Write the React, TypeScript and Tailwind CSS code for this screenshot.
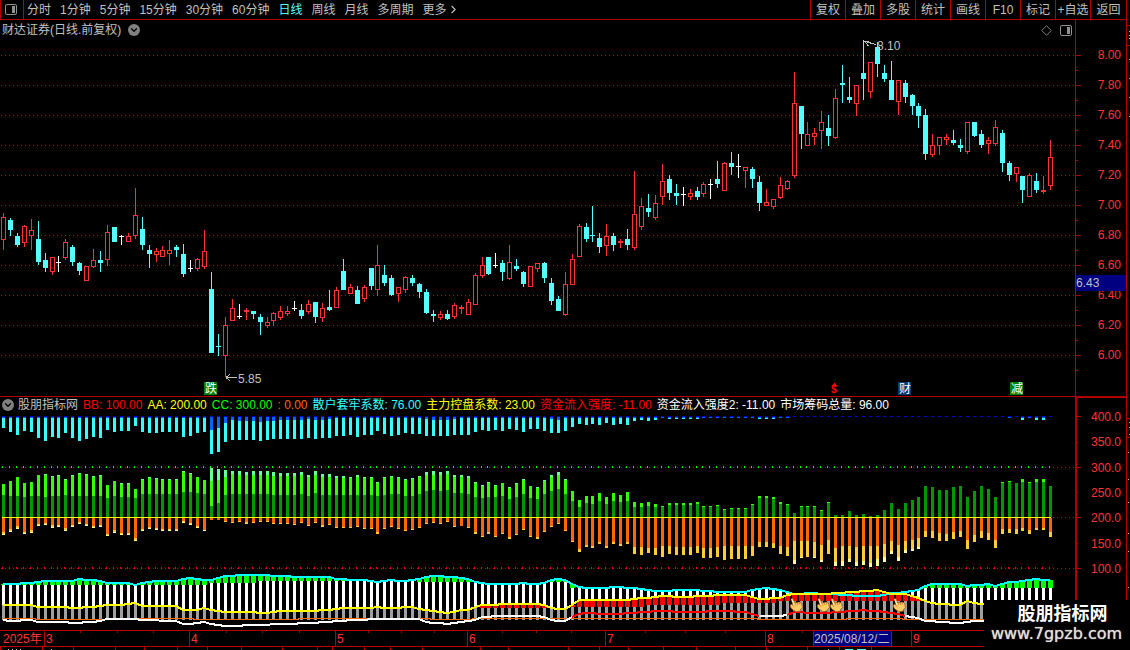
import { ChevronDown, ChevronRight } from 'lucide-react'

const periods = ['分时', '1分钟', '5分钟', '15分钟', '30分钟', '60分钟', '日线', '周线', '月线', '多周期']
const tools = ['复权', '叠加', '多股', '统计', '画线', 'F10', '标记', '+自选', '返回']
const prices = ['8.00', '7.80', '7.60', '7.40', '7.20', '7.00', '6.80', '6.60', '6.40', '6.20', '6.00']
const levels = ['400.0', '350.0', '300.0', '250.0', '200.0', '150.0', '100.0']

const legend = [
  { text: 'BB: 100.00', color: 'text-[#ff0000]' },
  { text: 'AA: 200.00', color: 'text-[#ffff00]' },
  { text: 'CC: 300.00', color: 'text-[#00ff00]' },
  { text: ': 0.00', color: 'text-[#ff6600]' },
  { text: '散户套牢系数: 76.00', color: 'text-[#33ffff]' },
  { text: '主力控盘系数: 23.00', color: 'text-[#ffff00]' },
  { text: '资金流入强度: -11.00', color: 'text-[#ff0000]' },
  { text: '资金流入强度2: -11.00', color: 'text-white' },
  { text: '市场筹码总量: 96.00', color: 'text-white' },
]

const months = [
  { label: '2025年', span: 44 },
  { label: '3', span: 145 },
  { label: '4', span: 146 },
  { label: '5', span: 132 },
  { label: '6', span: 138 },
  { label: '7', span: 160 },
  { label: '8', span: 146 },
  { label: '9', span: 215 },
]

// kind high top bottom low, r = up, c = down, w = flat
const candles = `r 213 217 240 250,c 218 220 230 236,c 233 236 245 247,r 225 226 243 247,r 219 230 236 250,c 221 239 262 265,c 253 260 268 272,r 257 257 272 275,w 256 262 263 272,r 239 242 258 260
c 245 247 262 266,c 262 263 271 275,r 266 266 281 281,r 249 260 267 268,c 251 260 263 272,r 225 232 260 266,c 227 227 242 242,w 235 236 237 245,r 233 236 242 242,r 188 215 236 239
c 217 229 245 250,c 245 250 254 268,r 248 251 255 262,r 246 250 257 257,r 240 250 254 265,c 245 247 250 257,c 244 254 274 277,w 260 268 269 272,r 258 259 269 271,r 230 251 267 269
c 272 289 353 353,c 334 346 347 356,r 317 325 356 377,r 299 308 321 321,w 304 316 317 319,r 308 310 312 320,c 311 311 314 319,c 314 317 322 335,r 317 322 326 328,r 312 313 321 326
r 306 311 318 320,r 306 311 314 316,w 301 308 309 311,c 304 310 316 319,r 300 304 312 314,c 302 302 317 323,r 303 308 318 322,c 290 307 310 311,r 287 290 308 308,c 259 271 290 290
r 284 287 294 294,c 286 290 304 304,r 285 287 299 302,c 268 268 286 290,r 245 265 290 296,c 265 275 283 286,c 275 278 295 296,r 287 287 294 302,r 276 277 290 293,c 275 278 283 286
c 283 284 292 298,c 289 292 313 314,c 310 314 316 322,r 311 314 318 320,c 310 314 319 320,r 303 305 317 319,r 305 307 309 314,r 299 302 315 315,r 273 275 305 305,r 257 265 276 278
c 257 257 274 275,w 253 265 266 268,c 260 263 272 281,r 245 262 279 280,c 259 266 269 271,c 271 272 284 287,r 266 266 287 287,r 263 263 269 272,c 262 263 278 283,c 278 283 301 305
c 296 299 311 311,r 272 284 315 316,r 254 259 285 285,r 224 226 257 257,c 223 227 239 242,c 206 235 236 242,c 233 238 247 253,r 224 236 246 256,c 233 236 245 251,r 239 241 243 248
c 229 239 245 250,r 171 214 248 250,r 198 206 227 230,c 194 208 212 217,r 195 203 218 220,r 164 181 197 205,c 175 179 193 200,c 184 193 196 205,w 187 194 195 206,r 189 193 197 200
c 187 191 197 200,r 182 184 194 197,w 179 184 185 199,c 161 179 184 188,r 162 163 191 191,c 152 163 167 175,w 154 166 167 178,r 167 167 171 188,c 167 169 179 188,c 176 182 203 211
r 189 202 206 206,r 199 199 207 209,r 177 185 198 199,r 180 181 189 190,r 72 103 176 178,c 106 106 134 149,r 122 134 146 146,r 128 133 137 145,r 111 122 131 149,c 115 128 136 146
r 89 98 138 139,c 65 83 85 103,c 77 97 100 103,r 85 85 104 116,c 40 73 79 100,r 62 62 92 98,c 42 47 64 77,c 65 73 79 82,c 61 80 100 100,r 80 80 102 115
c 80 83 97 103,c 94 95 106 115,c 103 106 116 128,c 109 115 154 160,r 134 145 155 157,r 137 137 146 155,r 134 137 140 145,c 130 140 143 145,c 139 145 148 152,r 122 122 152 154
c 122 122 136 137,c 130 134 145 148,r 137 140 144 154,r 120 127 144 146,c 130 133 163 172,c 161 163 175 181,r 167 167 174 182,c 176 176 190 203,r 173 175 197 197,c 173 181 190 193
r 176 190 192 194,r 140 157 186 190`
  .split(/[,\n]/)
  .map((row) => {
    const [kind, ...ys] = row.trim().split(' ')
    const [high, top, bottom, low] = ys.map(Number)
    return { kind, high, top, bottom, low }
  })

const nums = (s: string) => s.trim().split(/\s+/).map(Number)

const upTop = nums(`24 21 17 23 22 15 14 16 15 19 15 13 14 16 15 25 21 23 23 29 19 17 18 19 19 19 11 13 17 20
8 9 10 11 11 12 11 11 11 12 13 13 13 12 15 11 14 14 16 16 17 15 17 17 22 17 16 17 19 18
16 12 11 12 11 15 15 16 22 25 22 25 23 27 23 19 26 27 20 15 12 19 31 40 36 36 33 37 33 35
32 42 43 42 44 46 43 43 43 43 42 46 46 45 49 48 48 48 44 36 36 37 42 44 53 46 46 46 50 42
55 55 51 55 54 56 55 50 43 49 43 40 37 26 27 30 30 27 26 37 31 26 29 37 22 21 23 19 22 19 19 26`)

const upDark = nums(`35 36 36 37 36 36 37 36 36 35 36 36 36 36 36 38 36 37 37 38 34 34 34 34 34 34 32 32 33 34
46 43 35 34 34 34 34 34 34 35 35 35 35 34 36 33 35 35 35 35 35 35 35 35 36 35 34 34 36 36
34 31 30 31 30 33 33 34 37 38 37 37 36 39 37 34 38 39 34 31 29 34 41 47 43 44 41 44 41 42
41 47 47 46 47 47 45 45 45 45 44 47 47 46 50 49 49 49 45 38 38 39 44 45 53 47 47 47 51 43
55 55 51 55 54 56 55 50 43 49 43 40 37 26 27 30 30 27 26 37 31 26 29 37 23 22 23 22 23 22 22 26`)

const upPale = nums(`0 0 0 0 0 0 1 1 1 1 1 1 1 1 1 0 0 1 1 0 1 1 1 1 1 1 1 1 0 0
13 11 7 3 4 3 4 4 4 4 3 3 3 3 2 4 3 3 2 2 1 2 1 1 1 1 1 1 1 1
1 3 4 3 3 2 2 2 1 1 1 1 0 1 1 1 0 1 1 2 3 1`)

const downBody = nums(`72 69 66 72 70 64 63 65 65 68 65 62 64 66 65 74 70 73 73 78 69 67 68 69 69 69 61 63 66 70
60 60 61 62 61 62 62 61 61 63 63 63 64 62 65 62 65 64 67 67 67 66 68 68 72 68 66 68 70 69
67 63 62 63 61 66 66 67 72 76 72 76 73 77 74 69 76 77 71 66 63 70 81 89 85 86 82 86 82 84
82 87 87 88 88 86 86 87 87 87 86 88 88 87 86 86 86 86 86 82 82 83 86 87 81 81 81 82 85 80
88 86 86 87 86 86 86 84 81 85 81 80 78 71 71 73 74 72 71 80 75 71 73 80 69 69 69 68 70 68 68 72`)

const downTip = nums(`75 72 69 74 73 66 65 68 67 71 67 64 66 68 67 76 73 75 75 81 71 69 70 71 71 71 63 65 68 71
60 60 62 63 62 64 63 62 62 64 64 64 65 63 66 63 67 65 68 68 68 67 69 69 74 69 67 69 71 70
68 64 63 64 62 67 66 68 74 77 74 77 74 79 75 70 77 79 72 67 64 71 82 92 87 88 84 88 84 86
84 94 95 93 95 97 94 95 95 95 93 98 98 97 100 99 99 99 96 87 87 88 94 96 104 98 97 98 102 94
106 106 102 106 105 107 106 102 94 101 93 91 89 77 78 81 81 79 77 89 82 78 80 88 74 73 74 71 74 70 70 77`)

// pale tips of the lower bars, from bar 114 on
const tipPale = nums('4 1 0 1 2 0 4 5 3 4 4 4 7 5 3 4 3 2 2')

const hang = nums(`12 16 19 15 16 22 25 21 22 17 22 25 23 21 22 14 16 15 15 10 16 17 17 16 16 16 21 20 17 16
38 36 26 24 24 24 24 25 24 23 23 23 23 23 22 23 22 22 20 20 19 21 19 19 15 18 20 19 17 18
18 20 20 20 20 19 19 19 16 14 15 14 15 13 14 16 13 13 15 17 17 15 11 8 9 8 9 7 9 8
9 5 4 5 4 2 3 3 3 3 3 2 2 2 2 2 2 2 2 3 3 3 2 2 0 0 0 0 0 0
0 0 0 0 0 0 0 0 0 0 0 0 0 0 0 0 0 0 0 0 0 0 0 0 0 2 0 4 2 4 4 0`)

// blue heads of the hanging bars, from bar 30 on
const hangHead = nums('14 12 7 4 5 5 5 6 5 5 4 4 4 4 3 4 4 3 2 2 2 2 2 2 2 2 2 2 2 2 2 3 4 4 4 3 2 2 2 2 2 2 2 2 2 2 2 2 2 3 4')

type Point = [number, number]

const retail: Point[] = [
  [0, 584], [4, 583], [6, 581], [10, 581], [11, 579], [13, 580], [14, 581], [15, 583], [18, 583], [19, 585], [20, 583], [22, 581],
  [25, 581], [26, 579], [27, 578], [29, 580], [30, 580], [31, 578], [32, 576], [34, 575], [38, 575], [40, 576], [43, 577], [47, 577],
  [48, 579], [52, 580], [54, 582], [56, 580], [58, 581], [60, 579], [61, 577], [62, 576], [65, 577], [67, 579], [68, 582], [70, 584],
  [74, 584], [75, 583], [77, 584], [78, 583], [79, 580], [80, 579], [81, 580], [82, 584], [83, 587], [85, 588], [89, 587], [91, 588],
  [93, 590], [95, 591], [97, 590], [100, 590], [103, 592], [107, 592], [108, 590], [110, 588], [112, 590], [114, 594], [116, 593],
  [120, 594], [123, 596], [126, 596], [128, 593], [130, 592], [132, 590], [133, 586], [134, 584], [138, 584], [139, 586], [142, 584],
  [143, 586], [145, 582], [147, 581], [149, 579], [151, 580],
]

const control: Point[] = [
  [0, 605], [4, 605], [5, 607], [9, 607], [10, 608], [13, 607], [15, 605], [17, 605], [19, 603], [20, 606], [25, 606], [26, 610],
  [28, 610], [29, 608], [31, 611], [32, 612], [36, 612], [38, 613], [40, 611], [43, 611], [47, 610], [49, 608], [52, 608], [54, 607],
  [56, 608], [59, 607], [61, 610], [64, 613], [66, 610], [67, 610], [68, 607], [69, 605], [73, 604], [77, 604], [78, 605], [79, 608],
  [81, 609], [82, 605], [83, 600], [89, 600], [91, 599], [95, 596], [98, 597], [101, 596], [104, 595], [107, 595], [109, 599],
  [112, 598], [113, 595], [114, 594], [119, 594], [120, 593], [124, 591], [126, 590], [128, 594], [130, 594], [132, 598], [133, 601],
  [134, 603], [138, 605], [139, 601], [141, 604], [145, 605], [151, 605],
]

const flow: Point[] = [
  [0, 620], [1, 621], [4, 620], [5, 622], [9, 622], [10, 623], [13, 622], [15, 619], [19, 619], [20, 620], [25, 621], [26, 624],
  [28, 623], [29, 622], [31, 625], [33, 626], [36, 625], [40, 624], [45, 623], [48, 621], [50, 620], [54, 619], [60, 619], [61, 622],
  [64, 624], [66, 622], [68, 620], [69, 617], [72, 616], [77, 616], [78, 617], [79, 620], [80, 621], [81, 621], [82, 617], [83, 614],
  [84, 613], [88, 614], [90, 613], [95, 611], [98, 612], [104, 611], [107, 612], [109, 616], [112, 616], [113, 615], [114, 612],
  [118, 613], [121, 612], [124, 610], [127, 612], [129, 614], [130, 616], [132, 618], [133, 621], [136, 622], [138, 623], [140, 621],
  [151, 622],
]

const barX = (i: number) => 3 + 7 * i - Math.floor((i + 8) / 15.5)

function at(points: Point[], i: number) {
  const k = points.findIndex((p) => p[0] >= i)
  if (k <= 0) return points[0][1]
  const [i0, y0] = points[k - 1]
  const [i1, y1] = points[k]
  return Math.round(y0 + ((y1 - y0) * (i - i0)) / (i1 - i0))
}

const trace = (points: Point[], from = 0, to = 151) =>
  Array.from({ length: to - from + 1 }, (_, n) => `${barX(from + n)},${at(points, from + n)}`).join(' ')

function greenBase(i: number) {
  if (i < 30) return 585
  if (i < 37) return 583
  if (i < 60) return 581
  if (i < 82) return 582
  return 588
}

function redBase(i: number) {
  if (i < 68 || i > 132) return 0
  if (i < 82) return 608
  if (i < 93) return 607
  if (i < 104) return 605
  if (i < 112) return 603
  return 601
}

function Dots({ y, from = 1 }: { y: number; from?: number }) {
  return <line x1={from} x2="1075" y1={y + 0.5} y2={y + 0.5} stroke="#a01818" strokeDasharray="1 3" />
}

function Candle({ i }: { i: number }) {
  const { kind, high, top, bottom, low } = candles[i]
  const x = barX(i)
  const color = kind === 'r' ? '#ff3333' : kind === 'c' ? '#55ffff' : '#ffffff'
  return (
    <g>
      <rect x={x} y={high} width="1" height={low - high} fill={color} />
      <rect x={x - 2} y={top} width="5" height={bottom - top} fill={color} />
      {kind === 'r' && bottom - top > 2 && <rect x={x - 1} y={top + 1} width="3" height={bottom - top - 2} fill="#000" />}
    </g>
  )
}

function Badge({ x, fill, text }: { x: number; fill: string; text: string }) {
  return (
    <g>
      <rect x={x} y="382" width="13" height="13" fill={fill} />
      <text x={x + 1} y="393" fontSize="12" fill="#fff">{text}</text>
    </g>
  )
}

function PriceChart() {
  return (
    <svg viewBox="0 40 1075 356" preserveAspectRatio="none" className="block w-full h-[356px]" shapeRendering="crispEdges">
      {prices.map((p, n) => <Dots key={p} y={55 + n * 30} />)}
      {candles.map((_, i) => <Candle key={i} i={i} />)}
      <g stroke="#c0c0c0" fill="none">
        <path d="M865 41.5 L876 44.5 M864 41.5 h5 M864.5 41 l4 5" />
        <path d="M226 377.5 h11 M226 377.5 l4 -3 M226 377.5 l4 3" />
      </g>
      <text x="877" y="50" fontSize="12" fill="#c0c0c0">8.10</text>
      <text x="238" y="383" fontSize="12" fill="#c0c0c0">5.85</text>
      <Badge x={204} fill="#008000" text="跌" />
      <Badge x={898} fill="#003a75" text="财" />
      <Badge x={1010} fill="#008000" text="减" />
      <path d="M834 383 l3 3 h-6 z" fill="#ff0000" />
      <text x="831" y="393" fontSize="10" fontWeight="bold" fill="#ff0000">$</text>
    </svg>
  )
}

function Hand({ x }: { x: number }) {
  return (
    <g transform={`translate(${x} 598)`} shapeRendering="auto">
      <path
        d="M1.2 .8 C2 .1 3 .6 3.4 1.6 L4.9 5 L8.8 4.1 C10.4 3.9 11.4 5 11.9 6.6 L12.4 9.6 L10.6 11.6 L10.9 12.9 L5.6 13.9 L4.9 12.7 C3 12.2 1.2 10.8 .5 9 C-.1 7.2 .3 6.2 1.9 6.2 L2.7 6.5 Z"
        fill="#ffcc66"
        stroke="#8a4b14"
        strokeWidth="0.7"
      />
      <path d="M1.6 1.2 L4 6.6" stroke="#fff0c8" fill="none" />
      <path d="M5.2 5.4 l.8 2 M7.3 5 l.7 2 M9.3 4.8 l.6 1.8 M2.6 7 l1.6 2" stroke="#b96c22" strokeWidth="0.7" fill="none" />
    </g>
  )
}

function IndicatorChart() {
  return (
    <svg viewBox="0 415 1075 215" preserveAspectRatio="none" className="block w-full h-[215px]" shapeRendering="crispEdges">
      <Dots y={467} />
      <Dots y={517} from={1053} />
      <Dots y={568} />
      {candles.map((_, i) => {
        const x = barX(i)
        const head = hangHead[i - 30] ?? 2
        const pale = upPale[i] ?? 0
        const tip = i < 30 ? 1 : (tipPale[i - 114] ?? 0)
        const top = 460 + upTop[i]
        const dark = 460 + upDark[i]
        const body = 460 + downBody[i]
        const end = 460 + downTip[i]
        const cyan = at(retail, i)
        const yellow = at(control, i)
        const green = greenBase(i) - cyan
        const red = redBase(i) - yellow
        return (
          <g key={i}>
            <rect x={x - 1} y="416" width="3" height={Math.max(hang[i], 1)} fill="#33ffff" />
            <rect x={x - 1} y="416" width="3" height={hang[i] ? Math.min(head, hang[i]) : 1} fill="#0066ff" />
            <rect x={x - 1} y="416" width="3" height="1" fill="#0000d8" />
            <rect x={x - 1} y="466" width="1" height="2" fill="#00ff00" />
            <rect x={x - 1} y="567" width="1" height="2" fill="#ff0000" />

            <rect x={x - 1} y={top} width="3" height={dark - top} fill="#33ff00" />
            <rect x={x - 1} y={top} width="3" height={pale} fill="#66ff99" />
            <rect x={x - 1} y={dark} width="3" height={517 - dark} fill="#009900" />
            <rect x={x - 1} y="518" width="3" height={body - 518} fill="#ff6600" />
            <rect x={x - 1} y={body} width="3" height={end - body} fill="#ffcc33" />
            <rect x={x - 1} y={end - tip} width="3" height={tip} fill="#ffff99" />

            <rect x={x - 1} y={cyan} width="3" height={Math.max(yellow - cyan, 0)} fill="#fff" />
            <rect x={x - 1} y={yellow} width="3" height={620 - yellow} fill="#a0a0a0" />
            {green > 0 && <rect x={x - 2} y={cyan} width="5" height={green} fill="#00ff00" />}
            {red > 0 && <rect x={x - 2} y={yellow} width="5" height={red} fill="#ff0000" />}
          </g>
        )
      })}
      <rect x="2" y="517" width="1049" height="1" fill="#ffff00" />
      <path d="M3 618.5 H35 V619.5 H107 V618.5 H193 V619.5 H298 V618.5 H430 V619.5 H472 V618.5 H757 V619.5 H846 V618.5 H902 V619.5 H1050" fill="none" stroke="#ff6600" />
      <g fill="none" strokeWidth="2">
        <polyline points={trace(flow)} stroke="#fff" />
        <polyline points={trace(flow, 82, 109)} stroke="#ff0000" />
        <polyline points={trace(flow, 113, 130)} stroke="#ff0000" />
        <polyline points={trace(retail)} stroke="#00ffff" />
        <polyline points={trace(control)} stroke="#ffff00" />
      </g>
      <Hand x={790} />
      <Hand x={817} />
      <Hand x={830} />
      <Hand x={893} />
    </svg>
  )
}

function LayoutIcon() {
  return (
    <svg width="12" height="11" viewBox="0 0 12 11" fill="none">
      <rect x="0.5" y="0.5" width="11" height="10" rx="1.5" stroke="#909090" />
      <rect x="7" y="2" width="3" height="7" fill="#909090" />
    </svg>
  )
}

function RoundToggle({ label }: { label: string }) {
  return (
    <button aria-label={label} className="flex size-3 items-center justify-center rounded-full bg-[#808080] text-black">
      <ChevronDown size={10} strokeWidth={3} />
    </button>
  )
}

export default function App() {
  return (
    <div className="relative flex min-h-screen w-full overflow-hidden bg-black font-['Liberation_Sans','Noto_Sans_CJK_SC',sans-serif] text-xs leading-4 text-[#c0c0c0]">
      <div className="flex min-w-0 flex-1 flex-col">
        {/* Toolbar */}
        <header className="flex h-5 shrink-0 items-stretch border-b border-l border-[#b00000]">
          <button aria-label="侧栏" className="flex w-[23px] items-center justify-start border-r border-[#b00000] pl-1">
            <LayoutIcon />
          </button>
          <nav className="flex flex-1 items-center gap-[9px] pl-[3px] whitespace-nowrap">
            {periods.map((p) => (
              <button key={p} className={p === '日线' ? 'text-[#55ffff]' : ''}>{p}</button>
            ))}
            <button className="flex items-center">
              更多
              <ChevronRight size={13} strokeWidth={2} />
            </button>
          </nav>
          <div className="flex">
            {tools.map((t) => (
              <button key={t} className="w-[35px] border-l border-[#b00000] whitespace-nowrap last:w-9">{t}</button>
            ))}
          </div>
        </header>

        {/* Price pane */}
        <section className="relative flex">
          <div className="min-w-0 flex-1">
            <div className="flex h-5 items-center gap-[7px] pl-[2px]">
              <h1>财达证券(日线.前复权)</h1>
              <RoundToggle label="财达证券" />
              <div className="ml-auto flex items-center gap-2 pr-[3px]">
                <svg width="11" height="11" viewBox="0 0 11 11" fill="none" stroke="#808080">
                  <path d="M5.5 .7 L10.3 5.5 L5.5 10.3 L.7 5.5 Z" />
                </svg>
                <LayoutIcon />
              </div>
            </div>
            <PriceChart />
          </div>
          <div className="flex w-[51px] shrink-0 border-l border-[#b00000]">
            <svg width="6" height="376" shapeRendering="crispEdges" fill="#b00000">
              {prices.map((p, n) => (
                <g key={p}>
                  <rect y={35 + n * 30} width="5" height="1" />
                  <rect y={50 + n * 30} width="2" height="1" />
                </g>
              ))}
            </svg>
            <div className="flex-1 pt-5 pr-[5px] text-right text-[#ff3333]">
              {prices.map((p) => (
                <div key={p} className="h-[30px] leading-[30px]">{p}</div>
              ))}
            </div>
          </div>
          <div className="absolute top-[255px] right-0 h-4 w-[50px] bg-[#000080]">6.43</div>
        </section>

        {/* Indicator pane */}
        <section className="flex border-t border-[#b00000]">
          <div className="min-w-0 flex-1">
            <div className="flex h-[18px] items-center gap-[5px] pb-0.5 pl-[2px] whitespace-nowrap">
              <div className="flex items-center gap-1">
                <RoundToggle label="股朋指标网" />
                <span>股朋指标网</span>
              </div>
              {legend.map((l) => (
                <span key={l.text} className={l.color}>{l.text}</span>
              ))}
            </div>
            <IndicatorChart />
          </div>
          <div className="flex w-[51px] shrink-0 border-t border-l-2 border-[#b00000]">
            <svg width="5" height="232" shapeRendering="crispEdges" fill="#b00000">
              {[18, 69, 119, 170].map((y) => <rect key={y} y={y} width="4" height="1" />)}
              {[44, 94, 145].map((y) => <rect key={y} y={y} width="1" height="1" />)}
            </svg>
            <div className="mt-[11px] flex h-[168px] flex-1 flex-col justify-between pr-[5px] text-right text-[#ff3333]">
              {levels.map((l) => <div key={l}>{l}</div>)}
            </div>
          </div>
        </section>

        {/* Time axis */}
        <footer>
          <div className="relative flex h-[17px] border-y border-[#b00000] text-[#ff3333]">
            {months.map((m, n) => (
              <div key={m.label} style={{ flex: `${m.span} 0 0px` }} className="min-w-0 whitespace-nowrap">
                <div className={n === 0 ? 'h-full pl-[3px]' : 'h-full border-l border-[#b00000] pl-px'}>{m.label}</div>
              </div>
            ))}
            <svg className="absolute inset-0 h-[2px] w-full" viewBox="0 0 1126 2" preserveAspectRatio="none" fill="#b00000">
              {[80, 117, 153, 226, 262, 299, 368, 401, 434, 502, 536, 571, 645, 685, 725, 802].map((x) => (
                <rect key={x} x={x} width="1" height="2" />
              ))}
            </svg>
            <div className="absolute top-0 left-[813px] h-[15px] w-[79px] border-x border-[#b00000] bg-[#000080] whitespace-nowrap text-[#c0c0c0]">
              2025/08/12/二
            </div>
          </div>
          <svg className="block h-[3px] w-full" viewBox="0 0 1126 3" preserveAspectRatio="none" fill="#b00000">
            {[0, 42, 73, 115, 144, 177, 207, 241, 282, 317, 332, 364, 390, 422, 480, 508, 568, 599, 628, 663, 696, 735, 766, 807, 839, 871].map((x) => (
              <rect key={x} x={x} width="1" height="3" />
            ))}
            <path d="M8 2h1v1h-1z M12 2h1v1h-1z M16 2h1v1h-1z M20 2h1v1h-1z M51 2h1v1h-1z M828 2h1v1h-1z" fill="#c0c0c0" />
            <path d="M845 2h8v1h-8z M857 2h9v1h-9z" fill="#55ffff" />
          </svg>
        </footer>
      </div>

      {/* Edge of the next panel */}
      <aside className="w-1 shrink-0 border-l border-[#b00000]">
        <svg width="3" height="650" shapeRendering="crispEdges">
          <path d="M0 25.5h3 M0 45.5h3 M0 418.5h3 M0 437.5h3" stroke="#b00000" />
          <path
            d="M2 31.5h1 M2 35.5h1 M2 38.5h1 M2 59.5h1 M2 78.5h1 M2 97.5h1 M2 116.5h1 M2 422.5h1 M2 427.5h1 M2 434.5h1 M1 452.5h1 M1 479.5h1 M1 502.5h1 M1 533.5h1 M1 551.5h1 M1 587.5h1"
            stroke="#c0c0c0"
          />
        </svg>
      </aside>

      <div className="absolute right-0 bottom-0 flex h-[50px] w-[146px] flex-col items-center bg-black pt-1 pr-px text-center">
        <span className="pl-3 text-lg leading-5 font-bold text-white">股朋指标网</span>
        <span className="font-['DejaVu_Sans',sans-serif] text-base leading-5 text-[#e0dcdc] [text-shadow:0_0_1px_#e0dcdc]">www.7gpzb.com</span>
      </div>
    </div>
  )
}
